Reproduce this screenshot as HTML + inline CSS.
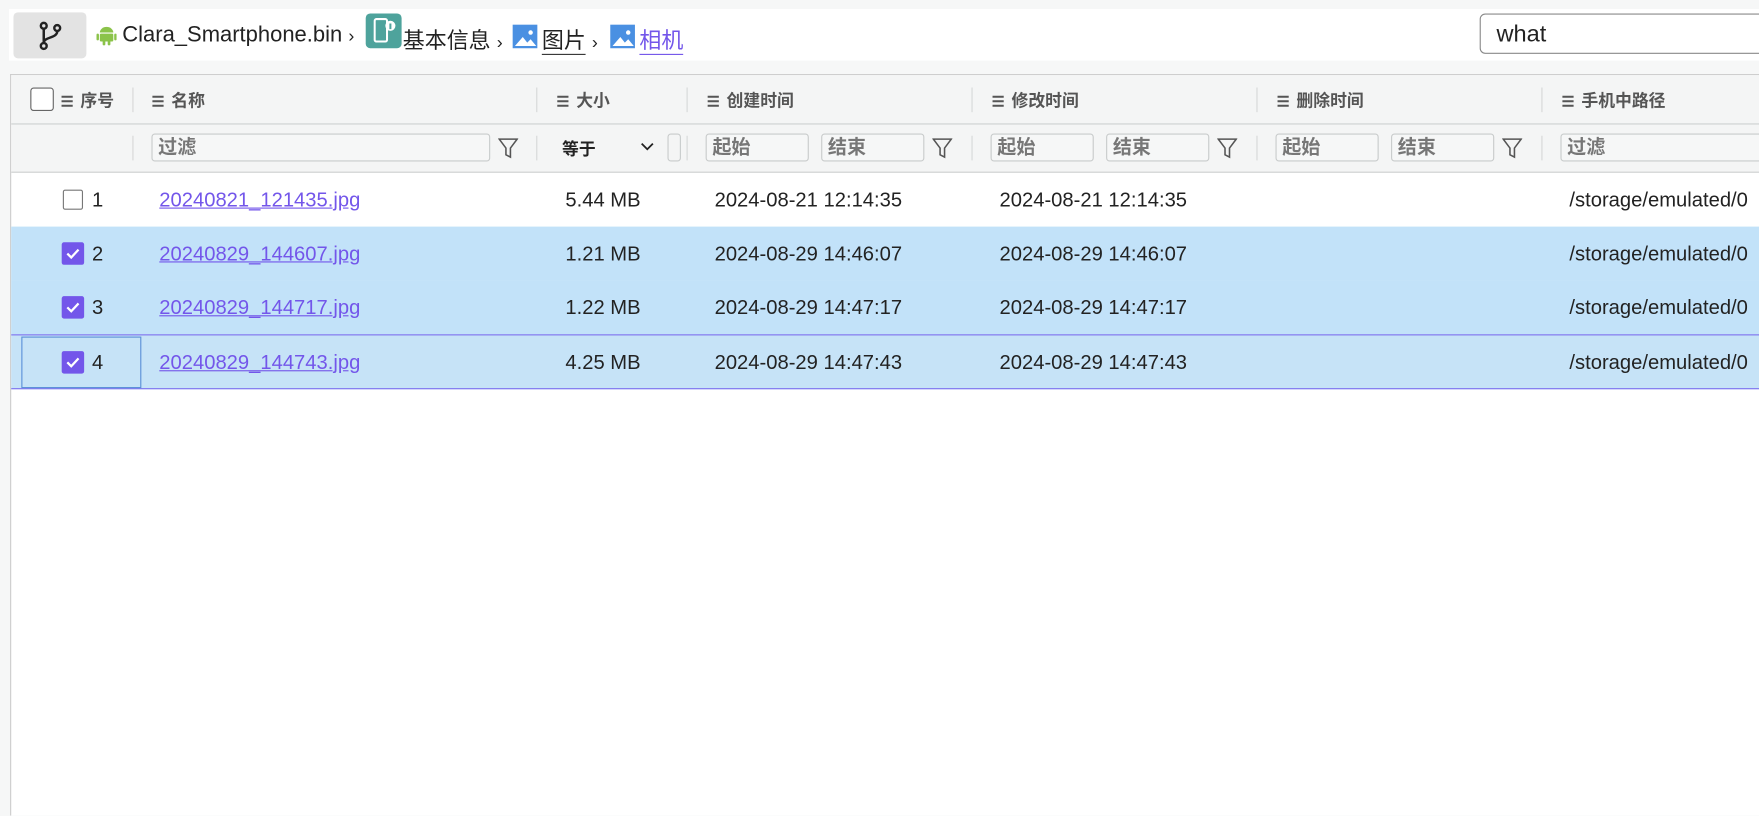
<!DOCTYPE html>
<html><head><meta charset="utf-8"><style>
html,body{margin:0;padding:0;width:1759px;height:814px;overflow:hidden;background:#f6f7f7}
#s{position:absolute;left:0;top:0;width:1568px;height:726px;transform:scale(1.12181);transform-origin:0 0;font-family:"Liberation Sans","Noto Sans CJK SC",sans-serif;color:#222}
.a{position:absolute}
.top{left:8px;top:8px;width:1560px;height:46px;background:#fff}
.br{left:12px;top:11px;width:65px;height:41px;background:#e3e3e3;border-radius:4px}
.bc{top:20px;font-size:19.6px;white-space:nowrap}
.tbl{left:9px;top:66px;width:1559px;height:660px;background:#fff;border-left:1px solid #ccc;border-top:1px solid #ccc}
.hd{left:0;top:0;width:1559px;height:43px;background:#f4f5f5;border-bottom:1px solid #cdd0d0}
.fr{left:0;top:44px;width:1559px;height:42px;background:#f4f5f5;border-bottom:1px solid #cdd0d0}
.h{top:12px;font-size:15px;font-weight:bold;color:#555}
.dv{width:1px;height:22px;background:#d6d8d8}
.ic{display:inline-block;vertical-align:middle;margin-right:6px;font-size:13px}
.in{height:25px;border:1px solid #c8cbcb;border-radius:3px;background:#f6f7f7;font-size:17px;font-weight:bold;color:#777;box-sizing:border-box;padding:0 5px;line-height:23px}
.row{left:0;width:1559px;height:48px;font-size:18px}
.row .a{top:14px}
.cb{width:18px;height:18px;border:1.5px solid #777;border-radius:2px;box-sizing:border-box;background:#fff;top:15px!important}
.ck{width:20px;height:20px;border-radius:2px;background:#7356ea;top:14px!important}
.lk{color:#7356ea;text-decoration:underline}
</style></head><body><div id="s">
<div class="a top"></div>
<div class="a br"><svg class="a" style="left:21px;top:8px" width="24" height="26" viewBox="0 0 24 26" fill="none" stroke="#222" stroke-width="2.2"><circle cx="6" cy="4" r="2.6"/><circle cx="6" cy="22" r="2.6"/><circle cx="18" cy="6" r="2.6"/><path d="M6 7v12M18 9c0 6-12 5-12 10"/></svg></div>
<svg class="a" style="left:86px;top:21px" width="18" height="20" viewBox="0 0 18 20" fill="#8bc34a"><path d="M3 8a6 5 0 0 1 12 0z"/><rect x="3" y="9" width="12" height="7" rx="1"/><rect x="0" y="9" width="2.2" height="6" rx="1"/><rect x="15.8" y="9" width="2.2" height="6" rx="1"/><rect x="5.5" y="15" width="2.4" height="4.5" rx="1"/><rect x="10" y="15" width="2.4" height="4.5" rx="1"/></svg>
<div class="a bc" style="left:109px">Clara_Smartphone.bin <span style="font-size:16px">›</span></div>
<div class="a" style="left:326px;top:12px;width:32px;height:31px;background:#4ea39c;border-radius:4px"><svg width="32" height="31" viewBox="0 0 32 31" fill="none" stroke="#fff" stroke-width="1.8"><rect x="8" y="5" width="11" height="20" rx="1.5"/><circle cx="22" cy="11" r="4.5" fill="#fff" stroke="none"/><path d="M22 9v5" stroke="#4ea39c"/></svg></div>
<div class="a bc" style="left:359px">基本信息 <span style="font-size:16px">›</span></div>
<div class="a" style="left:457px;top:22px;width:22px;height:21px;background:#4a90e2"><svg width="22" height="21"><path d="M2 19l7-8 4 5 3-3 5 6z" fill="#fff"/><circle cx="16" cy="7" r="2" fill="#fff"/></svg></div>
<div class="a bc" style="left:483px"><span style="border-bottom:1px solid #333">图片</span> <span style="font-size:16px">›</span></div>
<div class="a" style="left:544px;top:22px;width:22px;height:21px;background:#4a90e2"><svg width="22" height="21"><path d="M2 19l7-8 4 5 3-3 5 6z" fill="#fff"/><circle cx="16" cy="7" r="2" fill="#fff"/></svg></div>
<div class="a bc" style="left:570px;color:#7356ea"><span style="border-bottom:1px solid #7356ea">相机</span></div>
<div class="a" style="left:1319px;top:12px;width:260px;height:36px;border:1px solid #8a8a8a;border-radius:5px;background:#fff;box-sizing:border-box;font-size:21px;padding:6px 14px">what</div>

<div class="a tbl">
<div class="a hd">
<div class="a" style="left:17px;top:11px;width:21px;height:21px;border:1.5px solid #666;border-radius:3px;box-sizing:border-box;background:#fff"></div>
<div class="a h" style="left:44px"><span class="ic">☰</span>序号</div>
<div class="a dv" style="left:108px;top:11px"></div>
<div class="a h" style="left:125px"><span class="ic">☰</span>名称</div>
<div class="a dv" style="left:468px;top:11px"></div>
<div class="a h" style="left:486px"><span class="ic">☰</span>大小</div>
<div class="a dv" style="left:602px;top:11px"></div>
<div class="a h" style="left:620px"><span class="ic">☰</span>创建时间</div>
<div class="a dv" style="left:856px;top:11px"></div>
<div class="a h" style="left:874px"><span class="ic">☰</span>修改时间</div>
<div class="a dv" style="left:1110px;top:11px"></div>
<div class="a h" style="left:1128px"><span class="ic">☰</span>删除时间</div>
<div class="a dv" style="left:1364px;top:11px"></div>
<div class="a h" style="left:1382px"><span class="ic">☰</span>手机中路径</div>
</div>
<div class="a fr">
<div class="a dv" style="left:108px;top:10px"></div>
<div class="a in" style="left:125px;top:8px;width:302px">过滤</div>
<svg class="a" style="left:434px;top:11px" width="18" height="20" viewBox="0 0 18 20" fill="none" stroke="#555" stroke-width="1.4"><path d="M1 2h16l-6 8v8l-4-2v-6z"/></svg>
<div class="a dv" style="left:468px;top:10px"></div>
<div class="a" style="left:491px;top:11px;font-size:15px;font-weight:bold">等于</div>
<svg class="a" style="left:561px;top:16px" width="12" height="8"><path d="M1 1l5 5 5-5" stroke="#222" stroke-width="1.6" fill="none"/></svg>
<div class="a" style="left:585px;top:8px;width:12px;height:25px;border:1px solid #c8cbcb;border-radius:3px;box-sizing:border-box"></div>
<div class="a dv" style="left:602px;top:10px"></div>
<div class="a in" style="left:619px;top:8px;width:92px">起始</div>
<div class="a in" style="left:722px;top:8px;width:92px">结束</div>
<svg class="a" style="left:821px;top:11px" width="18" height="20" viewBox="0 0 18 20" fill="none" stroke="#555" stroke-width="1.4"><path d="M1 2h16l-6 8v8l-4-2v-6z"/></svg>
<div class="a dv" style="left:856px;top:10px"></div>
<div class="a in" style="left:873px;top:8px;width:92px">起始</div>
<div class="a in" style="left:976px;top:8px;width:92px">结束</div>
<svg class="a" style="left:1075px;top:11px" width="18" height="20" viewBox="0 0 18 20" fill="none" stroke="#555" stroke-width="1.4"><path d="M1 2h16l-6 8v8l-4-2v-6z"/></svg>
<div class="a dv" style="left:1110px;top:10px"></div>
<div class="a in" style="left:1127px;top:8px;width:92px">起始</div>
<div class="a in" style="left:1230px;top:8px;width:92px">结束</div>
<svg class="a" style="left:1329px;top:11px" width="18" height="20" viewBox="0 0 18 20" fill="none" stroke="#555" stroke-width="1.4"><path d="M1 2h16l-6 8v8l-4-2v-6z"/></svg>
<div class="a dv" style="left:1364px;top:10px"></div>
<div class="a in" style="left:1381px;top:8px;width:200px">过滤</div>
</div>

<div class="a row" style="top:87px">
<div class="a cb" style="left:46px"></div><div class="a" style="left:72px">1</div>
<div class="a lk" style="left:132px">20240821_121435.jpg</div><div class="a" style="left:494px">5.44 MB</div>
<div class="a" style="left:627px">2024-08-21 12:14:35</div><div class="a" style="left:881px">2024-08-21 12:14:35</div>
<div class="a" style="left:1389px">/storage/emulated/0</div></div>

<div class="a row" style="top:135px;background:#c2e2f9">
<div class="a ck" style="left:45px"><svg width="20" height="20"><path d="M5 10l3.5 3.5L15 6.5" stroke="#fff" stroke-width="2" fill="none"/></svg></div><div class="a" style="left:72px">2</div>
<div class="a lk" style="left:132px">20240829_144607.jpg</div><div class="a" style="left:494px">1.21 MB</div>
<div class="a" style="left:627px">2024-08-29 14:46:07</div><div class="a" style="left:881px">2024-08-29 14:46:07</div>
<div class="a" style="left:1389px">/storage/emulated/0</div></div>

<div class="a row" style="top:183px;background:#c2e2f9">
<div class="a ck" style="left:45px"><svg width="20" height="20"><path d="M5 10l3.5 3.5L15 6.5" stroke="#fff" stroke-width="2" fill="none"/></svg></div><div class="a" style="left:72px">3</div>
<div class="a lk" style="left:132px">20240829_144717.jpg</div><div class="a" style="left:494px">1.22 MB</div>
<div class="a" style="left:627px">2024-08-29 14:47:17</div><div class="a" style="left:881px">2024-08-29 14:47:17</div>
<div class="a" style="left:1389px">/storage/emulated/0</div></div>

<div class="a row" style="top:231px;background:#c6e3f7;border-top:1px solid #7b70ee;border-bottom:1px solid #7b70ee;height:47px">
<div class="a" style="left:9px;top:1px!important;width:105px;height:44px;border:1px solid #5b90d8"></div>
<div class="a ck" style="left:45px"><svg width="20" height="20"><path d="M5 10l3.5 3.5L15 6.5" stroke="#fff" stroke-width="2" fill="none"/></svg></div><div class="a" style="left:72px">4</div>
<div class="a lk" style="left:132px">20240829_144743.jpg</div><div class="a" style="left:494px">4.25 MB</div>
<div class="a" style="left:627px">2024-08-29 14:47:43</div><div class="a" style="left:881px">2024-08-29 14:47:43</div>
<div class="a" style="left:1389px">/storage/emulated/0</div></div>
</div>
</div></body></html>
